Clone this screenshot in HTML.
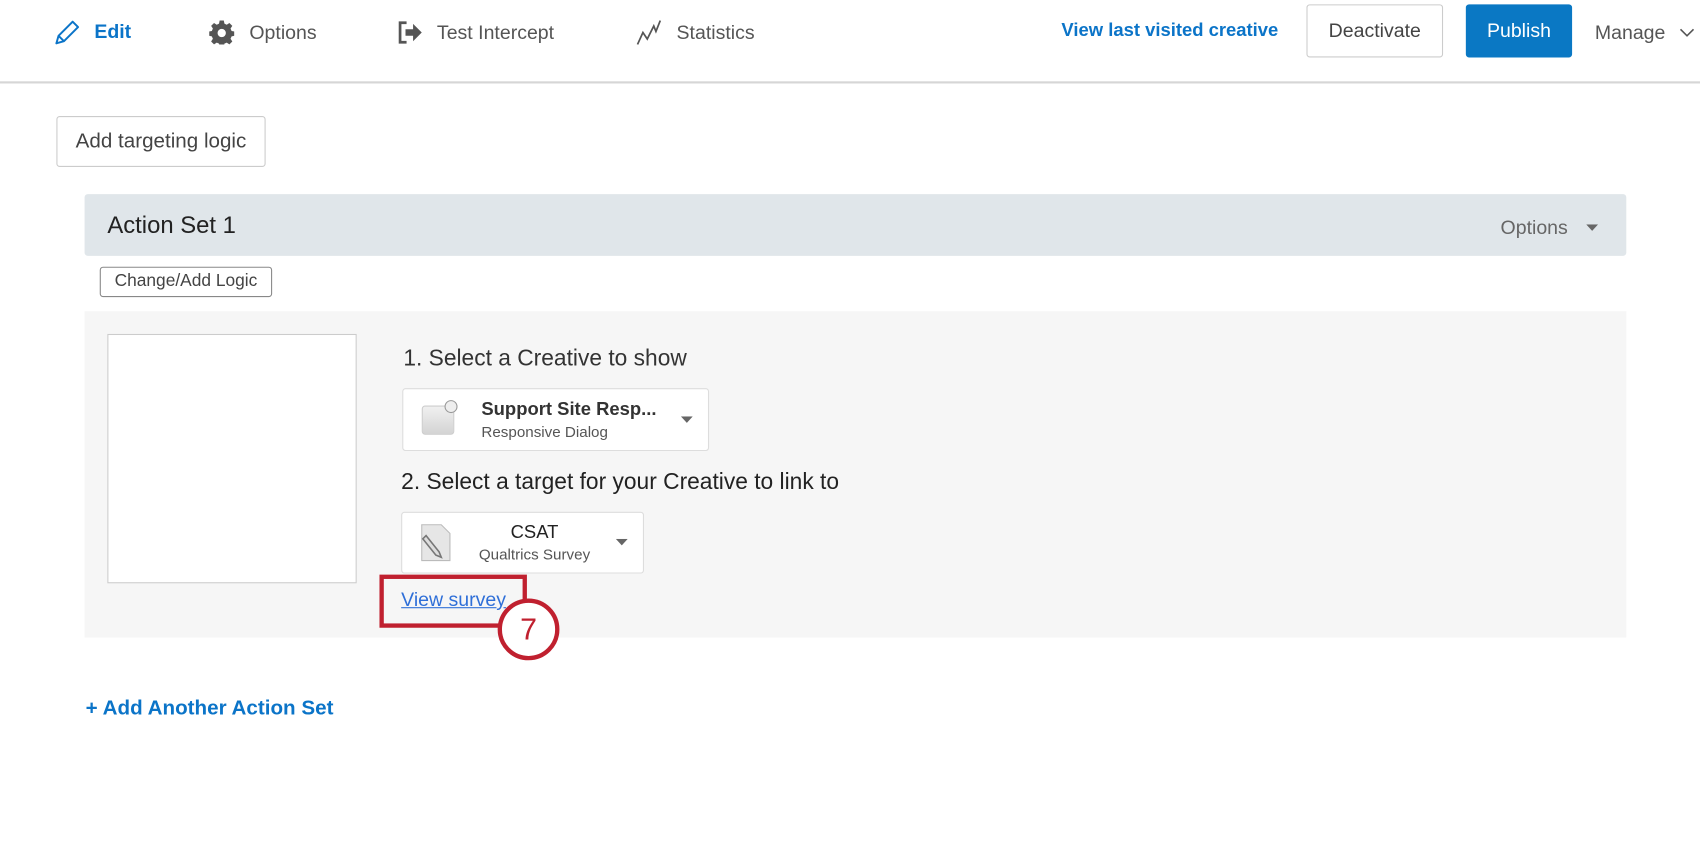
<!DOCTYPE html>
<html><head><meta charset="utf-8"><style>
html,body{margin:0;padding:0;width:1700px;height:850px;overflow:hidden;background:#fff;}
#w{position:absolute;left:0;top:0;width:1568px;height:784px;transform:scale(1.0842);transform-origin:0 0;font-family:"Liberation Sans",sans-serif;color:#333;}
.a{position:absolute;white-space:nowrap;}
.nav{font-size:18px;color:#555;}
.btn{position:absolute;border:1px solid #ccc;border-radius:3px;background:#fff;box-sizing:border-box;display:flex;align-items:center;justify-content:center;white-space:nowrap;}
</style></head><body><div id="w">
<div class="a" style="left:0;top:75px;width:1568px;height:2px;background:#d6d6d6"></div>
<svg class="a" style="left:49px;top:17px" width="26" height="26" viewBox="0 0 26 26"><path d="M3 23 L5 16 L18 3 L23 8 L10 21 Z M5 16 L10 21" fill="none" stroke="#0b74c8" stroke-width="1.8" stroke-linejoin="round"/></svg>
<div class="a" style="left:87px;top:19px;font-size:18px;font-weight:bold;color:#0b74c8">Edit</div>
<svg class="a" style="left:193px;top:18px" width="23" height="23" viewBox="0 0 24 24"><path fill="#555" d="M10 1h4l.6 3 2.2 1 2.6-1.7 2.8 2.8L20.5 8.7l1 2.3 3 .6v4l-3 .6-1 2.3 1.7 2.6-2.8 2.8-2.6-1.7-2.2 1-.6 3h-4l-.6-3-2.2-1-2.6 1.7-2.8-2.8 1.7-2.6-1-2.3-3-.6v-4l3-.6 1-2.3L1.8 6.1 4.6 3.3 7.2 5l2.2-1z"/><circle cx="12" cy="13" r="4" fill="#fff"/></svg>
<div class="a nav" style="left:230px;top:20px">Options</div>
<svg class="a" style="left:366px;top:18px" width="24" height="24" viewBox="0 0 24 24"><path d="M9 3H3v18h6" fill="none" stroke="#555" stroke-width="2.5"/><path d="M8 9h7V4l8 8-8 8v-5H8z" fill="#555"/></svg>
<div class="a nav" style="left:403px;top:20px">Test Intercept</div>
<svg class="a" style="left:587px;top:17px" width="24" height="26" viewBox="0 0 24 26"><path d="M1 24 L6 13 L10 19 L16 7 L18 12 L22 2" fill="none" stroke="#555" stroke-width="1.6"/></svg>
<div class="a nav" style="left:624px;top:20px">Statistics</div>
<div class="a" style="left:979px;top:18px;font-size:17px;font-weight:bold;color:#0b74c8">View last visited creative</div>
<div class="btn" style="left:1205px;top:4px;width:126px;height:49px;font-size:18px;color:#444">Deactivate</div>
<div class="btn" style="left:1352px;top:4px;width:98px;height:49px;font-size:18px;color:#fff;background:#0a78c4;border-color:#0a78c4">Publish</div>
<div class="a nav" style="left:1471px;top:20px">Manage</div>
<svg class="a" style="left:1549px;top:25px" width="14" height="10" viewBox="0 0 14 10"><path d="M1 2l6 6 6-6" fill="none" stroke="#555" stroke-width="1.5"/></svg>

<div class="btn" style="left:52px;top:107px;width:193px;height:47px;font-size:19px;color:#444">Add targeting logic</div>

<div class="a" style="left:78px;top:179px;width:1422px;height:57px;background:#e0e6ea;border-radius:3px"></div>
<div class="a" style="left:99px;top:195px;font-size:22px;color:#222">Action Set 1</div>
<div class="a" style="left:1384px;top:200px;font-size:18px;color:#666">Options</div>
<svg class="a" style="left:1463px;top:207px" width="11" height="7"><path d="M0 0h11L5.5 6z" fill="#666"/></svg>

<div class="btn" style="left:92px;top:246px;width:159px;height:28px;font-size:16px;color:#444;border-color:#888">Change/Add Logic</div>

<div class="a" style="left:78px;top:287px;width:1422px;height:301px;background:#f6f6f6"></div>
<div class="a" style="left:99px;top:308px;width:230px;height:230px;background:#fff;border:1px solid #ccc;box-sizing:border-box"></div>

<div class="a" style="left:372px;top:319px;font-size:21px;color:#333">1. Select a Creative to show</div>
<div class="btn" style="left:371px;top:358px;width:283px;height:58px;border-color:#ddd;display:block"></div>
<div class="a" style="left:389px;top:374px;width:30px;height:27px;background:linear-gradient(#f0f0f0,#d4d4d4);border-radius:3px;border:1px solid #ccc;box-sizing:border-box"></div>
<div class="a" style="left:410px;top:369px;width:12px;height:12px;border-radius:50%;background:#eee;border:1px solid #999;box-sizing:border-box"></div>
<div class="a" style="left:444px;top:368px;font-size:17px;font-weight:bold;color:#333">Support Site Resp...</div>
<div class="a" style="left:444px;top:390px;font-size:14px;color:#555">Responsive Dialog</div>
<svg class="a" style="left:628px;top:384px" width="11" height="7"><path d="M0 0h11L5.5 6z" fill="#666"/></svg>

<div class="a" style="left:370px;top:433px;font-size:21px;color:#222">2. Select a target for your Creative to link to</div>
<div class="btn" style="left:370px;top:472px;width:224px;height:57px;border-color:#ddd;display:block"></div>
<svg class="a" style="left:385px;top:482px" width="34" height="38" viewBox="0 0 34 38"><path d="M4 2h18l8 8v25H4z" fill="#e6e6e6" stroke="#bbb"/><path d="M8 12 L20 27 L22 32 L17 30 L5 15z" fill="#ddd" stroke="#777" stroke-width="1.5"/></svg>
<div class="a" style="left:443px;top:481px;width:100px;text-align:center;font-size:17px;color:#222">CSAT</div>
<div class="a" style="left:433px;top:503px;width:120px;text-align:center;font-size:14px;color:#555">Qualtrics Survey</div>
<svg class="a" style="left:568px;top:497px" width="11" height="7"><path d="M0 0h11L5.5 6z" fill="#666"/></svg>

<div class="a" style="left:370px;top:543px;font-size:18px;color:#2f6fd8;text-decoration:underline">View survey</div>
<div class="a" style="left:350px;top:530px;width:136px;height:49px;border:4px solid #c0202f;box-sizing:border-box"></div>
<div class="a" style="left:459px;top:552px;width:57px;height:57px;border-radius:50%;background:#fff;border:4px solid #c0202f;box-sizing:border-box;text-align:center;line-height:50px;font-size:28px;color:#c0202f">7</div>

<div class="a" style="left:79px;top:643px;font-size:19px;font-weight:bold;color:#0b74c8">+ Add Another Action Set</div>
</div></body></html>
